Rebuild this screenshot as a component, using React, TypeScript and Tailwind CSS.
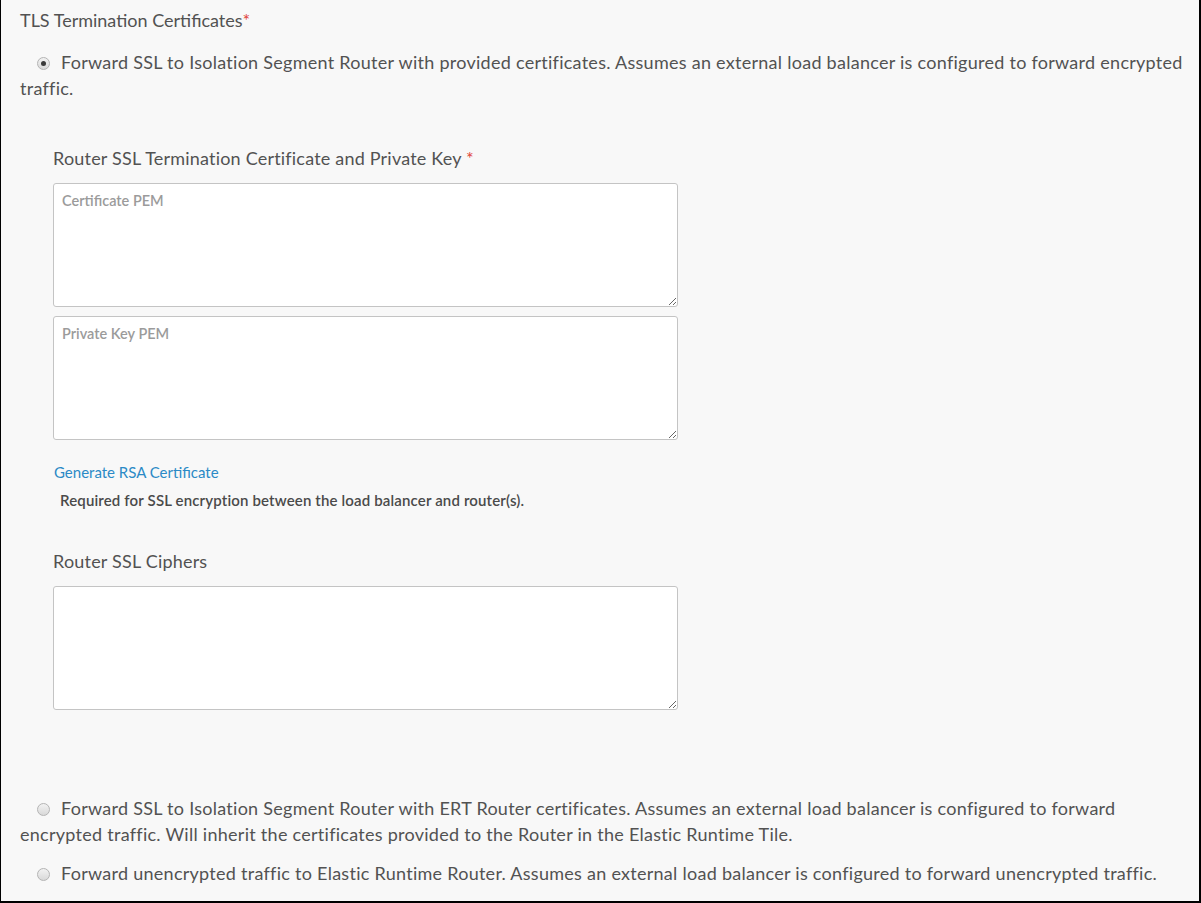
import React from 'react';

const font = { fontFamily: 'Lato, "Open Sans", sans-serif' };

function Radio({ checked }: { checked?: boolean }) {
  return (
    <span className="relative inline-block align-[-1px] ml-[17px] mr-[11px] h-[13px] w-[13px] rounded-full border border-[#b4b4b4] bg-gradient-to-b from-[#f2f2f2] to-[#d9d9d9]">
      {checked && (
        <span className="absolute left-[3px] top-[3px] h-[5px] w-[5px] rounded-full bg-[#3a3a3a]" />
      )}
    </span>
  );
}

function Area({ placeholder }: { placeholder?: string }) {
  return (
    <textarea
      placeholder={placeholder}
      className="block h-[124px] w-[625px] rounded-[3px] border border-[#c4c4c4] bg-white px-[8px] py-[4px] text-[14.5px] font-semibold text-[#444] placeholder:text-[#9b9b9b] outline-none"
      style={font}
    />
  );
}

export default function App() {
  return (
    <div
      className="h-[903px] w-[1201px] overflow-hidden border-b-2 border-l border-r-2 border-black bg-[#f8f8f8] pl-[19px] pr-[10px] pt-[7px] text-[18px] leading-[26px] text-[#525252]"
      style={font}
    >
      <div>
        TLS Termination Certificates<span className="text-[#e0443a]">*</span>
      </div>

      <div className="mt-[16px] tracking-[0.27px]">
        <Radio checked />
        Forward SSL to Isolation Segment Router with provided certificates. Assumes an external load balancer is configured to forward encrypted traffic.
      </div>

      <div className="ml-[33px] mt-[44px]">
        <div className="tracking-[0.2px]">
          Router SSL Termination Certificate and Private Key <span className="text-[#e0443a]">*</span>
        </div>
        <div className="mt-[12px] flex flex-col gap-[9px]">
          <Area placeholder="Certificate PEM" />
          <Area placeholder="Private Key PEM" />
        </div>
        <div className="mt-[22px] pl-[1px] text-[15px] leading-[20px]">
          <a className="text-[#2b8ac6] cursor-pointer">Generate RSA Certificate</a>
        </div>
        <div className="mt-[8px] pl-[7px] text-[15px] font-semibold leading-[20px] tracking-[0.15px] text-[#4a4a4a]">
          Required for SSL encryption between the load balancer and router(s).
        </div>

        <div className="mt-[38px] tracking-[0.2px]">Router SSL Ciphers</div>
        <div className="mt-[12px]">
          <Area />
        </div>
      </div>

      <div className="mt-[85px] tracking-[0.27px]">
        <Radio />
        Forward SSL to Isolation Segment Router with ERT Router certificates. Assumes an external load balancer is configured to forward encrypted traffic. Will inherit the certificates provided to the Router in the Elastic Runtime Tile.
      </div>
      <div className="mt-[13px] tracking-[0.27px]">
        <Radio />
        Forward unencrypted traffic to Elastic Runtime Router. Assumes an external load balancer is configured to forward unencrypted traffic.
      </div>
    </div>
  );
}
